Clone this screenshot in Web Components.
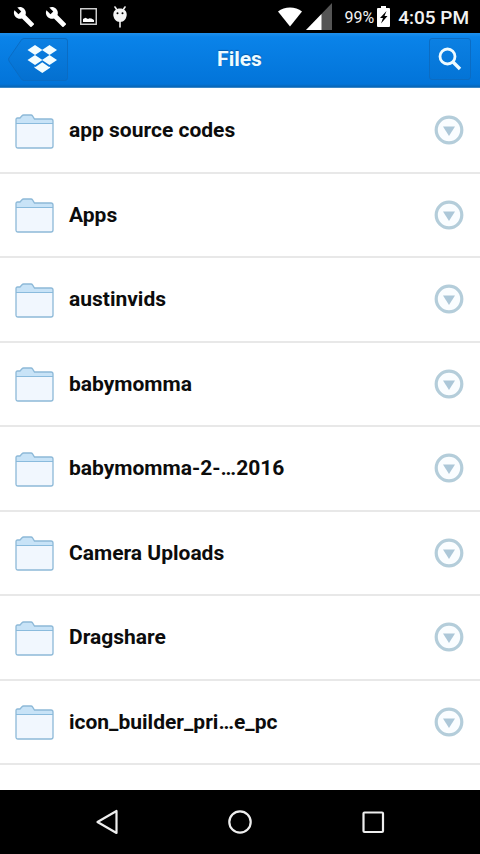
<!DOCTYPE html>
<html lang="en">
<head>
<meta charset="utf-8">
<meta name="viewport" content="width=device-width, initial-scale=1">
<title>Files</title>
<style>
html, body { height: 100%; margin: 0; }
body { background: #fff; color: #0c0c0c; font-family: Roboto, "Noto Sans", sans-serif; }
</style>
</head>
<body>
<file-app>
  <status-bar slot="status"></status-bar>
  <title-bar slot="header">Files</title-bar>
  <file-row>app source codes</file-row>
  <file-row>Apps</file-row>
  <file-row>austinvids</file-row>
  <file-row>babymomma</file-row>
  <file-row>babymomma-2-…2016</file-row>
  <file-row>Camera Uploads</file-row>
  <file-row>Dragshare</file-row>
  <file-row>icon_builder_pri…e_pc</file-row>
  <nav-bar slot="nav"></nav-bar>
</file-app>
<script>
const BUTTON = `button { border: 0; padding: 0; margin: 0; background: none; color: inherit; font: inherit; display: grid; place-items: center; cursor: pointer; } svg { display: block; }`;

class Base extends HTMLElement {
  constructor() {
    super();
    this.attachShadow({ mode: "open" }).innerHTML = this.constructor.markup;
  }
}

customElements.define("file-app", class extends Base {
  static markup = `
    <style>
      :host { display: flex; flex-direction: column; min-height: 100vh; }
      main { flex: 1; display: grid; grid-auto-rows: 1fr; padding: 1px 0 25px; }
    </style>
    <slot name="status"></slot>
    <slot name="header"></slot>
    <main role="list"><slot></slot></main>
    <slot name="nav"></slot>`;
});

customElements.define("status-bar", class extends Base {
  static markup = `
    <style>
      :host { display: flex; justify-content: space-between; align-items: center; height: 33px; padding: 0 11px 0 13px; background: #000; color: #f2f2f2; }
      div { display: flex; align-items: center; }
      svg { display: block; }
      .left { gap: 10px; }
      .pic { margin: 0 6px 0 3px; }
      .signal { margin: 0 12px 0 4px; }
      .level { font-size: 16px; line-height: 20px; margin-top: 3px; }
      .battery { margin: 0 8px 0 3px; }
      .time { font-size: 19px; line-height: 24px; font-weight: 500; margin-top: 2px; }
    </style>
    <div class="left">
      <svg width="22" height="22" viewBox="0 0 24 24" fill="#fff"><path d="M22.7 19l-9.1-9.1c.9-2.3.4-5-1.5-6.9-2-2-5-2.4-7.4-1.3L9 6 6 9 1.6 4.7C.4 7.1.9 10.1 2.9 12.1c1.9 1.9 4.6 2.4 6.9 1.5l9.1 9.1c.4.4 1 .4 1.4 0l2.3-2.3c.5-.4.5-1.1.1-1.4z"/></svg>
      <svg width="22" height="22" viewBox="0 0 24 24" fill="#fff"><path d="M22.7 19l-9.1-9.1c.9-2.3.4-5-1.5-6.9-2-2-5-2.4-7.4-1.3L9 6 6 9 1.6 4.7C.4 7.1.9 10.1 2.9 12.1c1.9 1.9 4.6 2.4 6.9 1.5l9.1 9.1c.4.4 1 .4 1.4 0l2.3-2.3c.5-.4.5-1.1.1-1.4z"/></svg>
      <svg class="pic" width="17" height="17" viewBox="0 0 17 17"><rect x=".75" y=".75" width="15.5" height="15.5" fill="none" stroke="#d8d8d8" stroke-width="1.4"/><path d="M3 14v-3l2.5-1.2L8 11l1.500-.7 2 .2 2.500 1.500V14z" fill="#fff"/></svg>
      <svg width="14" height="22" viewBox="0 0 14 22"><path d="M2 1l2 3M12 1l-2 3M7 15v6" stroke="#eee" stroke-width="1.6" stroke-linecap="round"/><path d="M7 2.500c4 0 6.700 2.400 6.700 6 0 4-2.700 7.500-6.700 7.500S.3 12.500.3 8.500c0-3.600 2.700-6 6.700-6z" fill="#f4f4f4"/><circle cx="4.500" cy="7.300" r="1"/><circle cx="9.500" cy="7.300" r="1"/></svg>
    </div>
    <div>
      <svg width="24" height="20" viewBox="0 0 24 20"><path d="M0 4.500C6.500-.8 17.500-.8 24 4.500L12 19.500z" fill="#fff"/></svg>
      <svg class="signal" width="26" height="27" viewBox="0 0 26 27"><path d="M26 0v27H0z" fill="#555"/><path d="M15.500 11v16H0z" fill="#fff"/></svg>
      <span class="level">99%</span>
      <svg class="battery" width="13" height="21" viewBox="0 0 13 21"><path d="M4 0h5v2h3q1 0 1 1v17q0 1-1 1H1q-1 0-1-1V3q0-1 1-1h3z" fill="#fff"/><path d="M9.500 5L3 12h3l-2 5.500L10.500 10h-3z" fill="#000"/></svg>
      <span class="time">4:05 PM</span>
    </div>`;
});

customElements.define("title-bar", class extends Base {
  static markup = `
    <style>
      :host { display: grid; grid-template-columns: 1fr auto 1fr; align-items: center; height: 55px; box-sizing: border-box; padding: 0 9px 3px 8px; color: #effbff; background: linear-gradient(#1f90ec 0, #0a83e9 4px, #0274d9 51px, #0765b5 54px, #6ba9dc 55px); }
      ${BUTTON}
      h1 { margin: 0; font-size: 21px; line-height: 24px; font-weight: 700; text-shadow: 0 -1px 1px #075aa8; }
      .home { justify-self: start; }
      .search { justify-self: end; width: 42px; height: 42px; border-radius: 3px; background: linear-gradient(#0b80e3, #0474d6); border: 1px solid #0b6cc3; }
    </style>
    <button class="home" aria-label="Home">
      <svg width="60" height="43" viewBox="0 0 60 43">
        <defs><linearGradient id="g" x2="0" y2="1"><stop stop-color="#0b80e3"/><stop offset="1" stop-color="#0470d0"/></linearGradient></defs>
        <path d="M16 .5H57q2.500 0 2.500 2.500V40q0 2.500-2.500 2.500H16q-2 0-3-2L1 23q-1-2 0-3L13 2.500q1-2 3-2z" fill="url(#g)" stroke="#0a6cc4"/>
        <path d="M27 7l7.500 5-7.500 5-7.500-5zM41.500 7l7.500 5-7.500 5-7.500-5zM27 17l7.500 5-7.500 5-7.500-5zM41.500 17l7.500 5-7.500 5-7.500-5zM26.500 28.500l1 .5 6.800-4.700 6.800 4.700 1-.5v1.200L34.300 35l-7.800-5.300z" fill="#f2fdff"/>
      </svg>
    </button>
    <h1><slot></slot></h1>
    <button class="search" aria-label="Search">
      <svg width="24" height="24" viewBox="0 0 24 24" fill="none" stroke="#effbff"><circle cx="9.500" cy="9.500" r="7.500" stroke-width="2.800"/><path d="M15 15l7 7" stroke-width="3.400"/></svg>
    </button>`;
});

customElements.define("file-row", class extends Base {
  static markup = `
    <style>
      :host { display: flex; align-items: center; box-sizing: border-box; min-height: 60px; padding: 0 16px 0 15px; border-bottom: 2px solid #e8e8e8; background: #fff; }
      ${BUTTON}
      .folder { flex: none; margin-top: 2px; }
      .name { flex: 1; min-width: 0; margin-left: 15px; font-size: 21px; line-height: 24px; font-weight: 700; }
    </style>
    <svg class="folder" width="39" height="35" viewBox="0 0 39 35">
      <path d="M1 9V5.500Q1 4 2.500 4H5L7 1.700Q7.600 1 8.600 1H16q1 0 1.500.8L19.500 5H36q2 0 2 2v2z" fill="#c8e3f7"/>
      <path d="M1 9.500H38V32q0 2-2 2H3q-2 0-2-2z" fill="#f1f7fe"/>
      <path d="M1 9.500H38" stroke="#8abbdd" stroke-width="1.200"/>
      <path d="M1 32V5.500Q1 4 2.500 4H5L7 1.700Q7.600 1 8.600 1H16q1 0 1.500.8L19.500 5H36q2 0 2 2V32q0 2-2 2H3q-2 0-2-2z" fill="none" stroke="#8db9d8" stroke-width="1.300"/>
    </svg>
    <span class="name"><slot></slot></span>
    <button aria-label="File actions">
      <svg width="30" height="30" viewBox="0 0 30 30"><circle cx="15" cy="15" r="12.800" fill="#fafdff" stroke="#b4cdda" stroke-width="3.200"/><path d="M9 11.500H21L15 21z" fill="#acc7d8"/></svg>
    </button>`;
  connectedCallback() { this.setAttribute("role", "listitem"); }
});

customElements.define("nav-bar", class extends Base {
  static markup = `
    <style>
      :host { display: block; background: #000; }
      nav { display: flex; justify-content: center; align-items: center; gap: 109px; height: 64px; }
      ${BUTTON}
    </style>
    <nav aria-label="System">
      <button aria-label="Back"><svg width="24" height="26" viewBox="0 0 24 26"><path d="M21.500 2v22L2.500 13z" fill="none" stroke="#eee" stroke-width="2.200" stroke-linejoin="round"/></svg></button>
      <button aria-label="Home"><svg width="24" height="26" viewBox="0 0 24 26"><circle cx="12" cy="13" r="10.700" fill="none" stroke="#eee" stroke-width="2.200"/></svg></button>
      <button aria-label="Recent apps"><svg width="24" height="26" viewBox="0 0 24 26"><rect x="2.500" y="3.500" width="19.500" height="19.500" rx="1" fill="none" stroke="#eee" stroke-width="2.200"/></svg></button>
    </nav>`;
});
</script>
</body>
</html>
